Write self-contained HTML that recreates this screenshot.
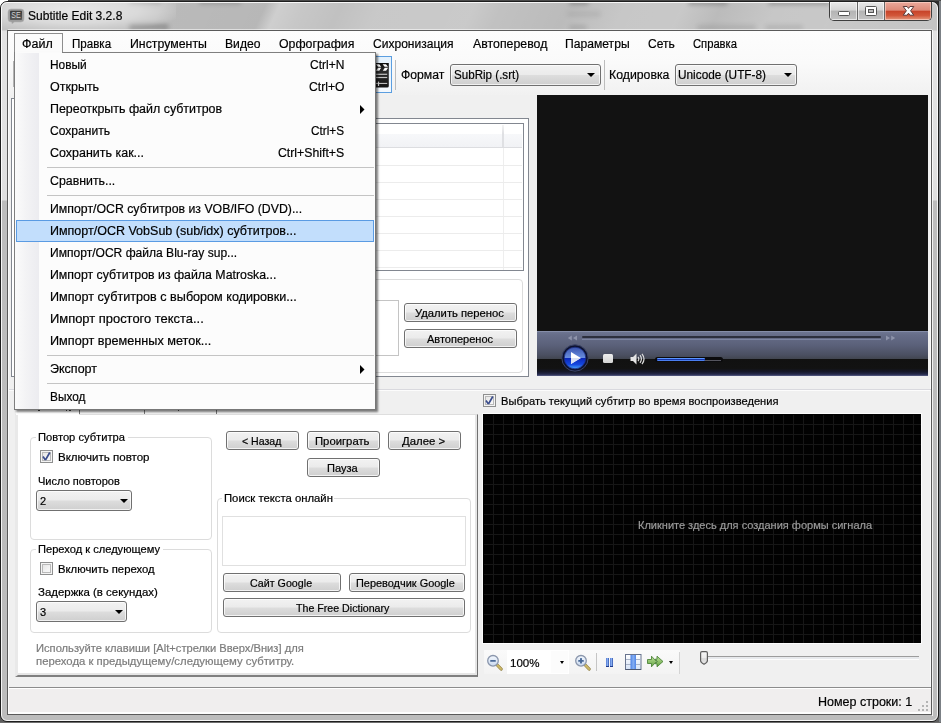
<!DOCTYPE html>
<html><head><meta charset="utf-8"><title>Subtitle Edit 3.2.8</title>
<style>
html,body{margin:0;padding:0;}
body{width:941px;height:723px;overflow:hidden;position:relative;background:#fff;font-family:'Liberation Sans',sans-serif;}
div,span,svg{position:absolute;box-sizing:border-box;}
.t{white-space:pre;line-height:normal;font-family:'Liberation Sans',sans-serif;-webkit-text-stroke:0.2px currentColor;}
#texts{left:0;top:0;width:941px;height:723px;}
/* window frame */
#out-r{left:939px;top:0;width:2px;height:723px;background:#7b8085;}
#out-b{left:0;top:722px;width:941px;height:1px;background:#6e6e6e;}
#out-t{left:8px;top:0;width:933px;height:1px;background:#4a4a4a;}
#win{left:0;top:1px;width:939px;height:721px;border:1px solid #1e1e1e;border-radius:7px;background:linear-gradient(to bottom,#c1c1c1 0px,#c1c1c1 28px,#e3e3e3 29px,#e0e0e0 198px,#bdbdbd 199px,#bcbcbc 100%);overflow:hidden;}
#win .hl{left:0;top:0;right:0;bottom:0;border:1px solid rgba(255,255,255,.85);border-radius:6px;}
#glow{left:-30px;top:-13px;width:205px;height:42px;background:radial-gradient(ellipse at center,rgba(255,255,255,.62) 0%,rgba(255,255,255,.4) 45%,rgba(255,255,255,0) 78%);}
#client-b{left:7px;top:30px;width:925px;height:685px;border:1px solid #5a5a5a;background:#f0f0f0;}
#client-w{left:8px;top:31px;width:923px;height:683px;border:1px solid #fbfbfb;border-top:none;}
/* caption buttons */
#cap{left:829px;top:2px;width:103px;height:19px;border:1px solid #3e3e3e;border-top:none;border-radius:0 0 5px 5px;overflow:hidden;background:#ccc;}
#cap .b{top:0;height:18px;}
.capg{background:linear-gradient(#e9e9e9 0%,#d6d6d6 45%,#b4b4b4 50%,#c3c3c3 100%);box-shadow:inset 0 0 0 1px rgba(255,255,255,.6);}
#bclose{background:linear-gradient(#eaa99c 0%,#dd8a78 45%,#c8442a 52%,#d2573a 75%,#e39a80 100%);box-shadow:inset 0 0 0 1px rgba(255,220,210,.6);}
/* menubar/toolbar */
#bars{left:8px;top:31px;width:923px;height:64px;background:linear-gradient(#fdfdfd 0%,#fafafa 50%,#f1f1f1 100%);}
.combo{border:1px solid #707070;border-radius:3px;background:linear-gradient(#f2f2f2 0%,#ebebeb 48%,#dddddd 52%,#cfcfcf 100%);box-shadow:inset 0 0 0 1px rgba(255,255,255,.7);}
.arr{width:0;height:0;border-left:4px solid transparent;border-right:4px solid transparent;border-top:4px solid #000;}
.btn{border:1px solid #707070;border-radius:3px;background:linear-gradient(#f2f2f2 0%,#ebebeb 48%,#dddddd 52%,#cfcfcf 100%);box-shadow:inset 0 0 0 1px rgba(255,255,255,.75);}
.vsep{width:1px;background:#bdbdbd;}
.gb{border:1px solid #dcdcdc;border-radius:4px;}
.gbl{background:#fff;height:4px;}
.cb{width:13px;height:13px;border:1px solid #8e8f8f;background:linear-gradient(135deg,#e0e0e0 0%,#f4f4f4 60%,#fafafa 100%);box-shadow:inset 0 0 0 1px #f4f4f4, inset 0 0 0 2px #b9b9b9;}
/* dropdown menu */
#menu{left:14px;top:52px;width:362px;height:358px;border:1px solid #7f7f7f;border-right-color:#777;border-bottom-color:#777;background:#fcfcfc;box-shadow:2px 2px 2px rgba(0,0,0,.5);}
#menu .gut{left:0;top:0;width:24px;height:356px;background:linear-gradient(90deg,#fbfbfb 0%,#f3f3f5 45%,#ececf0 100%);}
.msep{left:32px;width:327px;height:1px;background:#c4c4c4;}
#hi{left:1px;top:167px;width:358px;height:22px;border:1px solid #5a9be3;background:#c2defc;}
#streaks{left:0;top:0;width:937px;height:28px;background:linear-gradient(115deg,rgba(255,255,255,0) 0%,rgba(255,255,255,0) 17%,rgba(0,0,0,.04) 19%,rgba(0,0,0,.05) 28%,rgba(255,255,255,.22) 29.500%,rgba(255,255,255,.1) 32%,rgba(255,255,255,0) 36%,rgba(255,255,255,.12) 40%,rgba(255,255,255,.14) 50%,rgba(255,255,255,0) 53%,rgba(0,0,0,.03) 60%,rgba(255,255,255,.1) 66%,rgba(255,255,255,.12) 72%,rgba(0,0,0,.03) 76%,rgba(255,255,255,.1) 82%,rgba(255,255,255,.12) 88%,rgba(255,255,255,.05) 100%);}
.sm{filter:blur(2px);border-radius:3px;}

</style></head>
<body>
<div style="left:928px;top:0;width:13px;height:10px;background:#2e2e2e;"></div><div style="left:0;top:713px;width:10px;height:10px;background:#5e5e5e;"></div><div style="left:929px;top:713px;width:12px;height:10px;background:#5e5e5e;"></div>
<div id="out-r"></div><div id="out-b"></div><div id="out-t"></div>
<div id="win"><div id="streaks"></div><div class="sm" style="left:568px;top:-1px;width:20px;height:4px;background:rgba(0,0,0,0.22);"></div><div class="sm" style="left:687px;top:-1px;width:40px;height:4px;background:rgba(0,0,0,0.22);"></div><div class="sm" style="left:767px;top:-1px;width:62px;height:4px;background:rgba(0,0,0,0.22);"></div><div class="sm" style="left:198px;top:-1px;width:42px;height:3px;background:rgba(0,0,0,0.2);"></div><div class="sm" style="left:128px;top:-1px;width:32px;height:3px;background:rgba(0,0,0,0.2);"></div><div class="sm" style="left:568px;top:23px;width:18px;height:5px;background:rgba(0,0,0,0.1);"></div><div class="sm" style="left:696px;top:23px;width:59px;height:5px;background:rgba(0,0,0,0.09);"></div><div class="sm" style="left:764px;top:23px;width:38px;height:5px;background:rgba(0,0,0,0.09);"></div><div class="sm" style="left:566px;top:9px;width:34px;height:6px;background:rgba(0,0,0,0.06);"></div><div class="sm" style="left:128px;top:22px;width:40px;height:6px;background:rgba(0,0,0,0.22);"></div><div id="glow"></div><div class="hl"></div></div>
<!-- caption buttons -->
<div id="cap">
 <div class="b capg" style="left:0;width:27px;"></div>
 <div class="b" style="left:27px;width:1px;background:#666;"></div>
 <div class="b capg" style="left:28px;width:26px;"></div>
 <div class="b" style="left:54px;width:1px;background:#666;"></div>
 <div class="b" id="bclose" style="left:55px;width:46px;"></div>
</div>
<svg style="left:829px;top:1px" width="103" height="20" viewBox="0 0 103 20">
 <rect x="9.500" y="10.500" width="11" height="4" rx="1" fill="#fff" stroke="#555" stroke-width="1"/>
 <rect x="36.500" y="5.500" width="11" height="9" rx="1" fill="#fff" stroke="#555"/>
 <rect x="39.500" y="8.500" width="5" height="3" fill="#bbb" stroke="#555"/>
 <path d="M74.200 5.500 h3.900 l1.400 1.900 l1.400 -1.900 h3.900 l-3.200 4.300 l3.200 4.400 h-3.900 l-1.400 -2 l-1.400 2 h-3.900 l3.200 -4.400 z" fill="#fff" stroke="#5a3a3a" stroke-width="1" stroke-linejoin="round"/>
</svg>
<!-- app icon -->
<svg style="left:7px;top:8px" width="19" height="17" viewBox="0 0 19 17">
 <defs><linearGradient id="ig" x1="0" y1="0" x2="0" y2="1"><stop offset="0" stop-color="#3a3a3a"/><stop offset="1" stop-color="#5c5c5c"/></linearGradient></defs>
 <path d="M4 1 h10 a3 3 0 0 1 3 3 v7 a3 3 0 0 1 -3 3 h-6.500 l-2.500 1.800 l-0.300 -1.800 h-0.700 a3 3 0 0 1 -3 -3 v-7 a3 3 0 0 1 3 -3z" fill="#9c9c9c" stroke="#b4b4b4" stroke-width=".6"/>
 <rect x="3" y="2.800" width="12" height="9.300" rx=".8" fill="url(#ig)"/>
 <text x="9" y="10.400" font-family="Liberation Sans" font-size="8.600" fill="#d4d4d4" text-anchor="middle" textLength="9.400" lengthAdjust="spacingAndGlyphs">SE</text>
</svg>
<div style="left:8px;top:29px;width:924px;height:1px;background:rgba(255,255,255,.55);"></div>
<div style="left:932px;top:30px;width:1px;height:686px;background:rgba(255,255,255,.8);"></div>
<div id="client-b"></div>
<div id="bars"></div>
<div id="client-w"></div>

<!-- toolbar items -->
<div style="left:13px;top:61px;width:1px;height:26px;background:#b4b4b4;"></div>
<div style="left:364px;top:56px;width:28px;height:37px;border:1px solid #5b9ee0;background:linear-gradient(#e4f1fc,#f3f8fd);"></div>
<svg style="left:365px;top:63px" width="24" height="25" viewBox="0 0 24 25">
 <defs><linearGradient id="cg" x1="0" y1="0" x2="0" y2="1"><stop offset="0" stop-color="#0c0c0c"/><stop offset=".35" stop-color="#2c2c2c"/><stop offset="1" stop-color="#141414"/></linearGradient></defs>
 <path d="M0 0 h23.800 v23 a1.600 1.600 0 0 1 -1.600 1.600 h-22.200z" fill="url(#cg)"/>
 <path d="M11 1.200 h3.200 l2 2.600 h-3.200z M17.600 1.200 h3.400 l2 2.600 h-3.400z" fill="#fff"/>
 <path d="M13 4.800 h3.200 l-2 3 h-3.200z M19.800 4.800 h3.300 l-2 3 h-3.300z" fill="#fff"/>
 <rect x="11" y="10.700" width="11.200" height="1.200" fill="#c4c4c4"/>
 <rect x="11" y="13.900" width="11.200" height="1.200" fill="#c4c4c4"/>
 <rect x="11" y="19.900" width="11.200" height="1" fill="#d0d0d0"/>
 <rect x="12.900" y="18.600" width="1.200" height="4.400" fill="#e0e0e0"/>
</svg>
<div class="vsep" style="left:395px;top:60px;height:30px;"></div>
<div class="combo" style="left:450px;top:64px;width:151px;height:22px;"></div>
<div class="arr" style="left:587px;top:73px;"></div>
<div class="vsep" style="left:604px;top:60px;height:30px;"></div>
<div class="combo" style="left:675px;top:64px;width:122px;height:22px;"></div>
<div class="arr" style="left:784px;top:73px;"></div>

<!-- left upper panel -->
<div style="left:11px;top:98px;width:4px;height:279px;border:1px solid #828790;border-right:none;border-bottom:none;background:#fff"></div>
<div style="left:370px;top:118px;width:159px;height:259px;border:1px solid #828790;border-left:none;background:#fff;"></div>
<div style="left:11px;top:376px;width:360px;height:1px;background:#828790;"></div>
<!-- list view -->
<div id="lv" style="left:370px;top:123px;width:154px;height:148px;border:1px solid #828790;border-left:none;background:#fff;overflow:hidden;">
 <div style="left:0;top:10px;width:152px;height:13px;background:linear-gradient(#f7f8fa 0%,#f1f2f5 100%);"></div>
 <div style="left:0;top:23px;width:152px;height:1px;background:#dcdde0;"></div>
 <div style="left:132px;top:1px;width:2px;height:22px;background:linear-gradient(#f4f4f4,#dfe0e3 40%,#dfe0e3);"></div>
 <div style="left:133px;top:24px;width:1px;height:124px;background:#eeeeee;"></div>
 <div style="left:0;top:41px;width:152px;height:1px;background:#ececec;"></div>
 <div style="left:0;top:58px;width:152px;height:1px;background:#ececec;"></div>
 <div style="left:0;top:75px;width:152px;height:1px;background:#ececec;"></div>
 <div style="left:0;top:92px;width:152px;height:1px;background:#ececec;"></div>
 <div style="left:0;top:109px;width:152px;height:1px;background:#ececec;"></div>
 <div style="left:0;top:126px;width:152px;height:1px;background:#ececec;"></div>
 <div style="left:0;top:143px;width:152px;height:1px;background:#ececec;"></div>
</div>
<!-- edit groupbox -->
<div class="gb" style="left:300px;top:279px;width:223px;height:94px;"></div>
<div style="left:300px;top:300px;width:99px;height:56px;border:1px solid #c4c4c4;background:#fff;"></div>
<div class="btn" style="left:404px;top:303px;width:113px;height:19px;"></div>
<div class="btn" style="left:404px;top:329px;width:113px;height:19px;"></div>

<!-- video panel -->
<div id="video" style="left:537px;top:95px;width:391px;height:281px;background:#121212;overflow:hidden;">
 <div style="left:0;top:236px;width:391px;height:28px;background:linear-gradient(#6f7793 0%,#666d88 15%,#5b617a 50%,#4b5062 85%,#41454f 100%);"></div>
 <div style="left:0;top:236px;width:391px;height:1px;background:#858da8;"></div>
 <div style="left:0;top:264px;width:391px;height:17px;background:linear-gradient(#111111 0%,#121212 55%,#16182a 75%,#262a4c 90%,#5a6088 100%);"></div>
 <div style="left:45px;top:241px;width:299px;height:2px;background:#2c2f3d;border-radius:1px;"></div>
 <div style="left:45px;top:244px;width:299px;height:1px;background:#7c84a0;"></div>
 <svg style="left:30px;top:240px" width="11" height="6" viewBox="0 0 11 6"><path d="M4.800 0.500 v5 l-4 -2.500z M10 0.500 v5 l-4 -2.500z" fill="#8e94ab"/></svg>
 <svg style="left:348px;top:240px" width="11" height="6" viewBox="0 0 11 6"><path d="M1 0.500 v5 l4 -2.500z M6.200 0.500 v5 l4 -2.500z" fill="#8e94ab"/></svg>
 <!-- play -->
 <svg style="left:22.600px;top:248.400px" width="30" height="30" viewBox="0 0 30 30">
  <defs>
  <linearGradient id="pgt" x1="0" y1="0" x2="0" y2="1"><stop offset="0" stop-color="#3b55b0"/><stop offset=".5" stop-color="#6a8fe0"/><stop offset=".5" stop-color="#0a25b8"/><stop offset=".8" stop-color="#1548e0"/><stop offset="1" stop-color="#4aa8ff"/></linearGradient>
  </defs>
  <circle cx="15" cy="15" r="13.200" fill="#0d1230" stroke="#3c4468" stroke-width="1"/>
  <circle cx="15" cy="15" r="10.800" fill="url(#pgt)" stroke="#1a2c80" stroke-width=".8"/>
  <path d="M11 9 l9.800 6 l-9.800 6z" fill="#fff"/>
  <path d="M11 15 l9.800 0 l-9.800 6z" fill="#d8e0f4"/>
 </svg>
 <div style="left:66px;top:259px;width:9.500px;height:9px;border-radius:1.500px;background:linear-gradient(#eeeeee,#d4d4d4);"></div>
 <svg style="left:92.500px;top:257.500px" width="16" height="12" viewBox="0 0 16 12">
  <path d="M0.500 4 h2.500 l3.500 -3.500 v11 l-3.500 -3.500 h-2.500z" fill="#e4e4e4"/>
  <path d="M8 3.800 q1.600 2.200 0 4.400 M10 2.200 q2.800 3.800 0 7.600 M12 0.800 q4 5.200 0 10.400" fill="none" stroke="#dcdcdc" stroke-width="1.200"/>
 </svg>
 <div style="left:118px;top:262px;width:68px;height:5px;border-radius:2.500px;background:#0b0b0d;"></div>
 <div style="left:168px;top:265px;width:16px;height:1px;background:#55555e;"></div>
 <div style="left:120px;top:263px;width:48px;height:3px;border-radius:1px;background:linear-gradient(#5a95ff 0%,#5a95ff 33%,#1836a8 34%,#1836a8 66%,#4a7ef0 67%,#4a7ef0 100%);"></div>
</div>

<!-- splitter line -->
<div style="left:9px;top:389px;width:922px;height:1px;background:#d9d9de;"></div>
<div style="left:9px;top:390px;width:922px;height:1px;background:#fcfcfc;"></div>

<!-- tab control (left bottom) -->
<div style="left:15px;top:414px;width:463px;height:263px;background:#fff;border-left:3px solid #e9e9e9;border-top:1px solid #dedede;border-right:1px solid #707070;border-bottom:2px solid #808080;box-shadow:inset -2px -2px 0 #e6e6e6;"></div>
<div style="left:16px;top:408px;width:63px;height:7px;background:#fff;"></div><div style="left:80px;top:408px;width:136px;height:6px;background:#f2f2f2;"></div><div style="left:38px;top:410px;width:2px;height:1px;background:#444;"></div><div style="left:66px;top:410px;width:1px;height:1px;background:#444;"></div><div style="left:69px;top:410px;width:2px;height:1px;background:#444;"></div><div style="left:178px;top:410px;width:1px;height:1px;background:#555;"></div>
<div style="left:79px;top:408px;width:1px;height:6px;background:#777;"></div>
<div style="left:144px;top:408px;width:1px;height:6px;background:#777;"></div>
<div style="left:216px;top:408px;width:1px;height:6px;background:#777;"></div>
<!-- groupboxes -->
<div class="gb" style="left:30px;top:437px;width:182px;height:103px;"></div>
<div class="gbl" style="left:36px;top:435px;width:92px;"></div>
<div class="cb" style="left:40px;top:450px;"></div>
<svg style="left:40px;top:450px" width="13" height="13" viewBox="0 0 13 13"><path d="M3 6.500 l2 3 l0.800 0 l4 -7" fill="none" stroke="#3a4c8c" stroke-width="1.700" /></svg>
<div class="combo" style="left:36px;top:490px;width:96px;height:21px;"></div>
<div class="arr" style="left:120px;top:499px;"></div>
<div class="gb" style="left:30px;top:549px;width:182px;height:84px;"></div>
<div class="gbl" style="left:36px;top:547px;width:127px;"></div>
<div class="cb" style="left:40px;top:562px;"></div>
<div class="combo" style="left:36px;top:601px;width:91px;height:21px;"></div>
<div class="arr" style="left:115px;top:610px;"></div>
<!-- buttons -->
<div class="btn" style="left:226px;top:431px;width:73px;height:19px;"></div>
<div class="btn" style="left:307px;top:431px;width:73px;height:19px;"></div>
<div class="btn" style="left:388px;top:431px;width:73px;height:19px;"></div>
<div class="btn" style="left:307px;top:458px;width:73px;height:19px;"></div>
<div class="gb" style="left:217px;top:498px;width:254px;height:135px;"></div>
<div class="gbl" style="left:222px;top:496px;width:112px;"></div>
<div style="left:222px;top:516px;width:244px;height:50px;border:1px solid #e0e0e0;background:#fff;"></div>
<div class="btn" style="left:223px;top:573px;width:118px;height:19px;"></div>
<div class="btn" style="left:349px;top:573px;width:116px;height:19px;"></div>
<div class="btn" style="left:223px;top:598px;width:242px;height:19px;"></div>

<!-- right bottom -->
<div class="cb" style="left:483px;top:394px;"></div>
<svg style="left:483px;top:394px" width="13" height="13" viewBox="0 0 13 13"><path d="M3 6.500 l2 3 l0.800 0 l4 -7" fill="none" stroke="#3a4c8c" stroke-width="1.700" /></svg>
<div id="wave" style="left:483px;top:414px;width:438px;height:229px;outline:1px solid #fcfcfc;background-color:#020202;background-image:linear-gradient(90deg,#171717 1px,transparent 1px),linear-gradient(#171717 1px,transparent 1px);background-size:10px 10px;background-position:0 0;"><div style="left:0;top:0;width:1px;height:229px;background:#020202;"></div><div style="left:0;top:0;width:438px;height:1px;background:#020202;"></div></div>
<!-- wave toolbar -->
<div style="left:484px;top:650px;width:196px;height:24px;background:linear-gradient(#fafafa,#f3f3f3);"></div>
<div style="left:507px;top:650px;width:62px;height:24px;background:#fff;"></div>
<div style="left:551px;top:651px;width:17px;height:22px;background:#fcfcfc;"></div>
<div class="arr" style="left:560px;top:661px;border-left-width:2.800px;border-right-width:2.800px;border-top-width:3px;"></div>
<svg style="left:486px;top:654px" width="17" height="17" viewBox="0 0 17 17"><defs><linearGradient id="lg" x1="0" y1="0" x2="0" y2="1"><stop offset="0" stop-color="#f4f8fd"/><stop offset="1" stop-color="#c9d9f0"/></linearGradient></defs><path d="M11.200 11 l3.900 4" stroke="#8f7c3c" stroke-width="3.200" stroke-linecap="round"/><path d="M11.200 11 l3.900 4" stroke="#cdb968" stroke-width="1.800" stroke-linecap="round"/><circle cx="7" cy="6.800" r="5.300" fill="url(#lg)" stroke="#8a96ac" stroke-width="1.300"/><rect x="4.200" y="5.900" width="5.600" height="1.900" rx=".5" fill="#4a6a98"/></svg>
<svg style="left:574px;top:654px" width="17" height="17" viewBox="0 0 17 17"><path d="M11.200 11 l3.900 4" stroke="#8f7c3c" stroke-width="3.200" stroke-linecap="round"/><path d="M11.200 11 l3.900 4" stroke="#cdb968" stroke-width="1.800" stroke-linecap="round"/><circle cx="7" cy="6.800" r="5.300" fill="url(#lg)" stroke="#8a96ac" stroke-width="1.300"/><rect x="4.200" y="5.900" width="5.600" height="1.900" rx=".5" fill="#4a6a98"/><rect x="6.050" y="4" width="1.900" height="5.600" rx=".5" fill="#4a6a98"/></svg>
<div class="vsep" style="left:596px;top:653px;height:18px;background:#c5c5c5;"></div>
<div style="left:606px;top:658px;width:3px;height:9px;background:linear-gradient(90deg,#4a70cc 0%,#8fb6f6 45%,#2c4ea8 100%);border-bottom:1px solid #1f3a8a;"></div>
<div style="left:610px;top:658px;width:3px;height:9px;background:linear-gradient(90deg,#4a70cc 0%,#8fb6f6 45%,#2c4ea8 100%);border-bottom:1px solid #1f3a8a;"></div>
<svg style="left:625px;top:654px" width="17" height="16" viewBox="0 0 17 16"><defs><linearGradient id="gc" x1="0" y1="0" x2="0" y2="1"><stop offset="0" stop-color="#ffffff"/><stop offset="1" stop-color="#d6e3f7"/></linearGradient><linearGradient id="gm" x1="0" y1="0" x2="1" y2="0"><stop offset="0" stop-color="#4a80e4"/><stop offset=".5" stop-color="#86aff2"/><stop offset="1" stop-color="#4f84e6"/></linearGradient></defs><rect x="0.500" y="0.500" width="15.500" height="15" fill="url(#gc)" stroke="#68748e"/><path d="M1 5.500 h15 M1 10.500 h15" stroke="#a9b4c8"/><rect x="5.500" y="1" width="5.500" height="14" fill="url(#gm)"/><path d="M0.500 15.500 h15.500" stroke="#4d5870"/></svg>
<svg style="left:647px;top:655px" width="17" height="13" viewBox="0 0 17 13"><defs><linearGradient id="ga" x1="0" y1="0" x2="0" y2="1"><stop offset="0" stop-color="#bfe39a"/><stop offset="1" stop-color="#62a242"/></linearGradient></defs><path d="M0.500 4.500 h4 v-3.300 l5 5.300 l-5 5.300 v-3.300 h-4z" fill="url(#ga)" stroke="#3f7a2c" stroke-width=".8"/><path d="M8.200 4.200 l1.800 0 v-3 l6 5.300 l-6 5.300 v-3 h-1.800 l2.200 -2.300z" fill="url(#ga)" stroke="#3f7a2c" stroke-width=".8"/></svg>
<div class="arr" style="left:668.700px;top:661px;border-left-width:2.700px;border-right-width:2.700px;border-top-width:3px;"></div>
<div class="vsep" style="left:679px;top:652px;height:22px;background:#d4d4d4;"></div>
<!-- slider -->
<div style="left:706px;top:656px;width:213px;height:1px;background:#9c9c9c;"></div>
<div style="left:706px;top:657px;width:213px;height:2px;background:#e7e9ec;"></div>
<div style="left:706px;top:659px;width:213px;height:1px;background:#fdfdfd;"></div>
<svg style="left:700px;top:651px" width="8" height="14" viewBox="0 0 8 14"><defs><linearGradient id="th" x1="0" y1="0" x2="0" y2="1"><stop offset="0" stop-color="#f6f6f6"/><stop offset=".5" stop-color="#ececec"/><stop offset=".55" stop-color="#dadada"/><stop offset="1" stop-color="#e6e6e6"/></linearGradient></defs><path d="M0.600 2 Q0.600 0.600 2 0.600 H6 Q7.400 0.600 7.400 2 V9.800 Q7.400 11.600 4 13.300 Q0.600 11.600 0.600 9.800 Z" fill="url(#th)" stroke="#5e5e5e" stroke-width="1.200"/></svg>

<!-- status bar -->
<div style="left:9px;top:687px;width:922px;height:1px;background:#8c8c8c;"></div>
<div style="left:9px;top:688px;width:922px;height:24px;background:#f0eeee;border-top:1px solid #fff;"></div>
<div style="left:9px;top:712px;width:922px;height:2px;background:#fdfdfd;"></div>
<svg style="left:918px;top:700px" width="11" height="12" viewBox="0 0 11 12"><g fill="#b4b4b4"><rect x="8" y="1" width="2" height="2"/><rect x="4" y="5" width="2" height="2"/><rect x="8" y="5" width="2" height="2"/><rect x="0" y="9" width="2" height="2"/><rect x="4" y="9" width="2" height="2"/><rect x="8" y="9" width="2" height="2"/></g></svg>

<!-- dropdown menu -->
<div style="left:14px;top:33px;width:49px;height:20px;border:1px solid #8e8e8e;border-bottom:none;background:#fbfbfb;"></div>
<div id="menu">
 <div class="gut"></div>
 <div id="hi"></div>
 <div class="msep" style="top:114px"></div>
 <div class="msep" style="top:142px"></div>
 <div class="msep" style="top:302px"></div>
 <div class="msep" style="top:330px"></div>
 <svg style="left:345px;top:52px" width="5" height="9" viewBox="0 0 5 9"><path d="M0 0 l4.500 4.500 l-4.500 4.500z" fill="#000"/></svg>
 <svg style="left:345px;top:312px" width="5" height="9" viewBox="0 0 5 9"><path d="M0 0 l4.500 4.500 l-4.500 4.500z" fill="#000"/></svg>
</div>
<div style="left:15px;top:52px;width:47px;height:1px;background:#fbfbfb;"></div>

<div id="texts">
<span class="t" style="left:28.00px;top:9.0px;font-size:12.5px;letter-spacing:0.000px;color:#000;transform:scaleX(0.9630);transform-origin:0 0;">Subtitle Edit 3.2.8</span>
<span class="t" style="left:22.00px;top:37.0px;font-size:12.5px;letter-spacing:0.000px;color:#000;transform:scaleX(1.0006);transform-origin:0 0;">Файл</span>
<span class="t" style="left:71.50px;top:37.0px;font-size:12.5px;letter-spacing:0.000px;color:#000;transform:scaleX(0.9268);transform-origin:0 0;">Правка</span>
<span class="t" style="left:129.50px;top:37.0px;font-size:12.5px;letter-spacing:0.000px;color:#000;transform:scaleX(0.9868);transform-origin:0 0;">Инструменты</span>
<span class="t" style="left:224.50px;top:37.0px;font-size:12.5px;letter-spacing:0.000px;color:#000;transform:scaleX(0.9718);transform-origin:0 0;">Видео</span>
<span class="t" style="left:279.00px;top:37.0px;font-size:12.5px;letter-spacing:0.000px;color:#000;transform:scaleX(0.9868);transform-origin:0 0;">Орфография</span>
<span class="t" style="left:373.00px;top:37.0px;font-size:12.5px;letter-spacing:0.000px;color:#000;transform:scaleX(0.9634);transform-origin:0 0;">Сихронизация</span>
<span class="t" style="left:472.50px;top:37.0px;font-size:12.5px;letter-spacing:0.000px;color:#000;transform:scaleX(0.9867);transform-origin:0 0;">Автоперевод</span>
<span class="t" style="left:565.00px;top:37.0px;font-size:12.5px;letter-spacing:0.000px;color:#000;transform:scaleX(0.9694);transform-origin:0 0;">Параметры</span>
<span class="t" style="left:647.50px;top:37.0px;font-size:12.5px;letter-spacing:0.000px;color:#000;transform:scaleX(0.9615);transform-origin:0 0;">Сеть</span>
<span class="t" style="left:692.50px;top:37.0px;font-size:12.5px;letter-spacing:-0.036px;color:#000;transform:scaleX(0.9000);transform-origin:0 0;">Справка</span>
<span class="t" style="left:401.00px;top:68.0px;font-size:12.5px;letter-spacing:0.000px;color:#000;transform:scaleX(0.9767);transform-origin:0 0;">Формат</span>
<span class="t" style="left:453.50px;top:68.0px;font-size:12.5px;letter-spacing:0.000px;color:#000;transform:scaleX(0.9280);transform-origin:0 0;">SubRip (.srt)</span>
<span class="t" style="left:609.00px;top:68.0px;font-size:12.5px;letter-spacing:0.000px;color:#000;transform:scaleX(0.9833);transform-origin:0 0;">Кодировка</span>
<span class="t" style="left:678.00px;top:68.0px;font-size:12.5px;letter-spacing:0.000px;color:#000;transform:scaleX(0.9458);transform-origin:0 0;">Unicode (UTF-8)</span>
<span class="t" style="left:49.50px;top:58.0px;font-size:12.5px;letter-spacing:0.000px;color:#000;transform:scaleX(0.9517);transform-origin:0 0;">Новый</span>
<span class="t" style="left:310.00px;top:58.0px;font-size:12.5px;letter-spacing:0.000px;color:#000;transform:scaleX(0.9589);transform-origin:0 0;">Ctrl+N</span>
<span class="t" style="left:49.50px;top:80.0px;font-size:12.5px;letter-spacing:0.000px;color:#000;transform:scaleX(1.0006);transform-origin:0 0;">Открыть</span>
<span class="t" style="left:309.00px;top:80.0px;font-size:12.5px;letter-spacing:0.000px;color:#000;transform:scaleX(0.9719);transform-origin:0 0;">Ctrl+O</span>
<span class="t" style="left:49.50px;top:102.0px;font-size:12.5px;letter-spacing:0.000px;color:#000;transform:scaleX(0.9942);transform-origin:0 0;">Переоткрыть файл субтитров</span>
<span class="t" style="left:49.50px;top:124.0px;font-size:12.5px;letter-spacing:0.000px;color:#000;transform:scaleX(0.9674);transform-origin:0 0;">Сохранить</span>
<span class="t" style="left:311.00px;top:124.0px;font-size:12.5px;letter-spacing:0.000px;color:#000;transform:scaleX(0.9417);transform-origin:0 0;">Ctrl+S</span>
<span class="t" style="left:49.50px;top:146.0px;font-size:12.5px;letter-spacing:0.000px;color:#000;transform:scaleX(0.9980);transform-origin:0 0;">Сохранить как...</span>
<span class="t" style="left:278.00px;top:146.0px;font-size:12.5px;letter-spacing:0.000px;color:#000;transform:scaleX(0.9819);transform-origin:0 0;">Ctrl+Shift+S</span>
<span class="t" style="left:49.50px;top:174.0px;font-size:12.5px;letter-spacing:0.000px;color:#000;transform:scaleX(0.9876);transform-origin:0 0;">Сравнить...</span>
<span class="t" style="left:49.50px;top:202.0px;font-size:12.5px;letter-spacing:0.000px;color:#000;transform:scaleX(0.9843);transform-origin:0 0;">Импорт/OCR субтитров из VOB/IFO (DVD)...</span>
<span class="t" style="left:49.50px;top:224.0px;font-size:12.5px;letter-spacing:0.000px;color:#000;transform:scaleX(1.0006);transform-origin:0 0;">Импорт/OCR VobSub (sub/idx) субтитров...</span>
<span class="t" style="left:49.50px;top:246.0px;font-size:12.5px;letter-spacing:0.000px;color:#000;transform:scaleX(0.9646);transform-origin:0 0;">Импорт/OCR файла Blu-ray sup...</span>
<span class="t" style="left:49.50px;top:268.0px;font-size:12.5px;letter-spacing:0.000px;color:#000;transform:scaleX(0.9869);transform-origin:0 0;">Импорт субтитров из файла Matroska...</span>
<span class="t" style="left:49.50px;top:290.0px;font-size:12.5px;letter-spacing:-0.000px;color:#000;transform:scaleX(1.0082);transform-origin:0 0;">Импорт субтитров с выбором кодировки...</span>
<span class="t" style="left:49.50px;top:312.0px;font-size:12.5px;letter-spacing:0.000px;color:#000;transform:scaleX(1.0340);transform-origin:0 0;">Импорт простого текста...</span>
<span class="t" style="left:49.50px;top:334.0px;font-size:12.5px;letter-spacing:0.000px;color:#000;transform:scaleX(1.0127);transform-origin:0 0;">Импорт временных меток...</span>
<span class="t" style="left:49.50px;top:362.0px;font-size:12.5px;letter-spacing:0.000px;color:#000;transform:scaleX(1.0006);transform-origin:0 0;">Экспорт</span>
<span class="t" style="left:49.50px;top:390.0px;font-size:12.5px;letter-spacing:0.000px;color:#000;transform:scaleX(0.9463);transform-origin:0 0;">Выход</span>
<span class="t" style="left:415.00px;top:307.0px;font-size:11px;letter-spacing:0.000px;color:#000;transform:scaleX(1.0210);transform-origin:0 0;">Удалить перенос</span>
<span class="t" style="left:427.00px;top:333.0px;font-size:11px;letter-spacing:0.000px;color:#000;transform:scaleX(1.0006);transform-origin:0 0;">Автоперенос</span>
<span class="t" style="left:37.50px;top:431.0px;font-size:11px;letter-spacing:0.000px;color:#000;transform:scaleX(1.0142);transform-origin:0 0;">Повтор субтитра</span>
<span class="t" style="left:58.00px;top:451.0px;font-size:11px;letter-spacing:0.000px;color:#000;transform:scaleX(1.0489);transform-origin:0 0;">Включить повтор</span>
<span class="t" style="left:37.50px;top:475.0px;font-size:11px;letter-spacing:0.000px;color:#000;transform:scaleX(1.0051);transform-origin:0 0;">Число повторов</span>
<span class="t" style="left:39.50px;top:495.0px;font-size:11px;letter-spacing:0.000px;color:#000;transform:scaleX(1.0006);transform-origin:0 0;">2</span>
<span class="t" style="left:37.50px;top:543.0px;font-size:11px;letter-spacing:0.000px;color:#000;transform:scaleX(1.0100);transform-origin:0 0;">Переход к следующему</span>
<span class="t" style="left:58.00px;top:563.0px;font-size:11px;letter-spacing:0.000px;color:#000;transform:scaleX(1.0258);transform-origin:0 0;">Включить переход</span>
<span class="t" style="left:38.00px;top:586.0px;font-size:11px;letter-spacing:0.000px;color:#000;transform:scaleX(1.0386);transform-origin:0 0;">Задержка (в секундах)</span>
<span class="t" style="left:39.50px;top:606.0px;font-size:11px;letter-spacing:0.000px;color:#000;transform:scaleX(1.0006);transform-origin:0 0;">3</span>
<span class="t" style="left:36.00px;top:642.0px;font-size:11px;letter-spacing:0.000px;color:#7c7c7c;transform:scaleX(1.0145);transform-origin:0 0;">Используйте клавиши [Alt+стрелки Вверх/Вниз] для</span>
<span class="t" style="left:36.00px;top:655.0px;font-size:11px;letter-spacing:0.000px;color:#7c7c7c;transform:scaleX(1.0305);transform-origin:0 0;">перехода к предыдущему/следующему субтитру.</span>
<span class="t" style="left:242.00px;top:435.0px;font-size:11px;letter-spacing:0.000px;color:#000;transform:scaleX(0.9612);transform-origin:0 0;">&lt; Назад</span>
<span class="t" style="left:314.50px;top:435.0px;font-size:11px;letter-spacing:0.000px;color:#000;transform:scaleX(1.0271);transform-origin:0 0;">Проиграть</span>
<span class="t" style="left:402.00px;top:435.0px;font-size:11px;letter-spacing:0.000px;color:#000;transform:scaleX(1.0344);transform-origin:0 0;">Далее &gt;</span>
<span class="t" style="left:327.00px;top:462.0px;font-size:11px;letter-spacing:0.000px;color:#000;transform:scaleX(1.0072);transform-origin:0 0;">Пауза</span>
<span class="t" style="left:223.50px;top:491.5px;font-size:11px;letter-spacing:0.000px;color:#000;transform:scaleX(1.0270);transform-origin:0 0;">Поиск текста онлайн</span>
<span class="t" style="left:249.50px;top:577.0px;font-size:11px;letter-spacing:0.000px;color:#000;transform:scaleX(0.9715);transform-origin:0 0;">Сайт Google</span>
<span class="t" style="left:356.00px;top:577.0px;font-size:11px;letter-spacing:0.000px;color:#000;transform:scaleX(0.9939);transform-origin:0 0;">Переводчик Google</span>
<span class="t" style="left:296.00px;top:602.0px;font-size:11px;letter-spacing:0.000px;color:#000;transform:scaleX(0.9670);transform-origin:0 0;">The Free Dictionary</span>
<span class="t" style="left:501.00px;top:395.0px;font-size:11px;letter-spacing:0.000px;color:#000;transform:scaleX(1.0103);transform-origin:0 0;">Выбрать текущий субтитр во время воспроизведения</span>
<span class="t" style="left:638.00px;top:519.0px;font-size:11px;letter-spacing:0.000px;color:#9a9a9a;transform:scaleX(1.0006);transform-origin:0 0;">Кликните здесь для создания формы сигнала</span>
<span class="t" style="left:509.50px;top:655.5px;font-size:11.8px;letter-spacing:0.000px;color:#000;transform:scaleX(0.9794);transform-origin:0 0;">100%</span>
<span class="t" style="left:818.00px;top:695.0px;font-size:12.5px;letter-spacing:0.000px;color:#000;transform:scaleX(1.0006);transform-origin:0 0;">Номер строки: 1</span>
</div>
</body></html>
